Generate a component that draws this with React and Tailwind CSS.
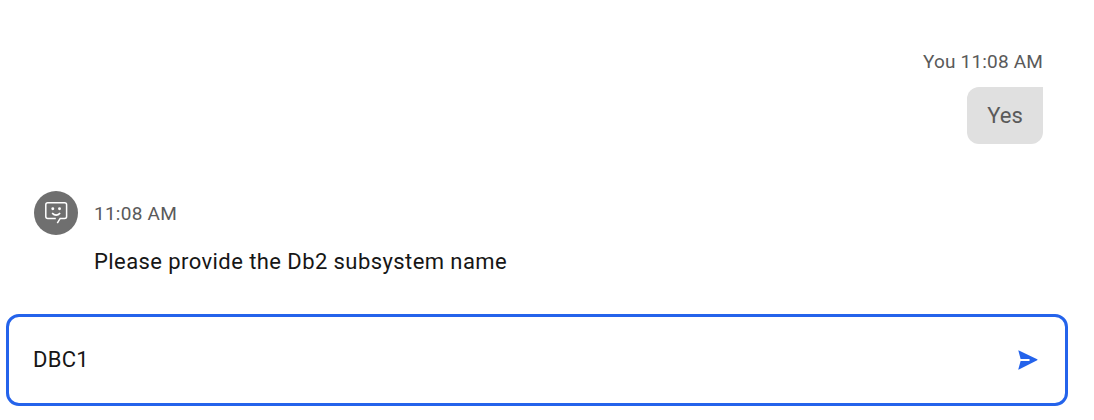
function BotAvatar() {
  return (
    <svg className="h-11 w-11 shrink-0" viewBox="0 0 44 44" fill="none">
      <circle cx="22" cy="22" r="22" fill="#6f6f6f" />
      <path
        d="M23.3 32.2 L26.2 27.4 H30.6 Q32.6 27.4 32.6 25.4 V13.8 Q32.6 11.8 30.6 11.8 H13.8 Q11.8 11.8 11.8 13.8 V25.4 Q11.8 27.4 13.8 27.4 H21.8"
        stroke="#fff"
        strokeWidth="1.5"
      />
      <circle cx="18.8" cy="17.7" r="1.45" fill="#fff" />
      <circle cx="25.5" cy="17.7" r="1.45" fill="#fff" />
      <path d="M18.1 22.1 Q22.1 26.1 26.2 22.1" stroke="#fff" strokeWidth="1.5" />
    </svg>
  );
}

function SendIcon() {
  return (
    <svg className="h-5 w-5" viewBox="0 0 20 20" fill="#2463eb">
      <path d="M0.4 0.8 Q0.1 0.1 0.9 0.4 L19.2 9.3 Q20 9.8 19.2 10.3 L0.9 19.6 Q0.1 19.9 0.4 19.1 L2.6 10.9 H11.5 V9.1 H2.6 Z" />
    </svg>
  );
}

export default function App() {
  return (
    <main className="flex h-[420px] w-[1094px] flex-col overflow-hidden bg-white font-['Roboto',sans-serif] text-[22px] text-[#161616]">
      <section className="mt-[50px] mr-[51px] flex flex-col items-end">
        <div className="h-6 text-[19px] leading-6 tracking-[0.18px] text-[#5a5a5a]">You 11:08 AM</div>
        <div className="mt-[13px] flex h-[57px] w-[76px] items-center justify-center rounded-[12px] rounded-tr-none bg-[#e0e0e0] text-[#5a5a5a]">
          Yes
        </div>
      </section>
      <section className="mt-[47px] ml-[34px]">
        <div className="flex items-center gap-4">
          <BotAvatar />
          <span className="pt-0.5 text-[19px] leading-6 tracking-[0.25px] text-[#5a5a5a]">11:08 AM</span>
        </div>
        <p className="mt-[12px] ml-[60px] h-[30px] leading-[30px] tracking-[0.42px]">
          Please provide the Db2 subsystem name
        </p>
      </section>
      <div className="mt-[37px] ml-[6px] flex h-[92px] w-[1062px] shrink-0 items-center justify-between rounded-[13px] border-[3px] border-[#2463eb] pr-[27px] pl-[24px]">
        <span className="leading-[30px] tracking-[0.3px]">DBC1</span>
        <SendIcon />
      </div>
    </main>
  );
}
